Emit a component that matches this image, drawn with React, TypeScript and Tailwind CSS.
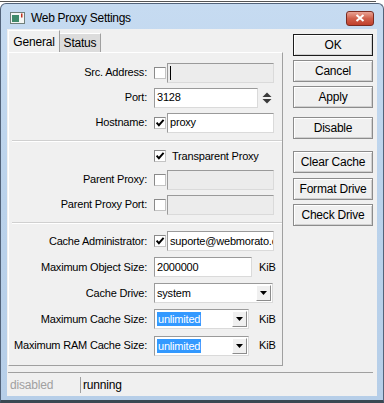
import React from "react";

const font = "font-['Liberation_Sans',Arial,sans-serif] tracking-[-0.2px]";

function CheckBox({ checked }: { checked?: boolean }) {
  return (
    <div className="w-[12px] h-[12px] shrink-0 bg-white border border-t-[#8a8a8a] border-l-[#8a8a8a] border-r-[#c4c4c4] border-b-[#c4c4c4] flex items-center justify-center">
      {checked && (
        <svg width="10" height="10" viewBox="0 0 10 10">
          <path d="M1.6 4.6 L3.9 7.2 L8.6 1.8" fill="none" stroke="#000" strokeWidth="1.9" />
        </svg>
      )}
    </div>
  );
}

function Field({
  value,
  w,
  disabled,
  cursor,
}: {
  value?: string;
  w: string;
  disabled?: boolean;
  cursor?: boolean;
}) {
  return (
    <div
      className={`${w} h-[20px] shrink-0 ${
        disabled ? "bg-[#ececec]" : "bg-white"
      } border border-t-[#9a9a9a] border-l-[#9a9a9a] border-r-[#dadada] border-b-[#dadada] flex items-center pl-[2px] overflow-hidden whitespace-nowrap`}
    >
      {cursor && <div className="w-[1px] h-[14px] bg-black" />}
      {value}
    </div>
  );
}

function DropArrow() {
  return (
    <div className="w-[15px] h-[16px] mr-[1px] shrink-0 bg-[#f0f0f0] border border-t-white border-l-white border-r-[#8c8c8c] border-b-[#8c8c8c] flex items-center justify-center">
      <svg width="7" height="4" viewBox="0 0 7 4">
        <path d="M0 0 H7 L3.5 4 Z" fill="#000" />
      </svg>
    </div>
  );
}

function Select({ value, w, selected }: { value: string; w: string; selected?: boolean }) {
  return (
    <div className={`${w} h-[20px] shrink-0 bg-white border border-t-[#9a9a9a] border-l-[#9a9a9a] border-r-[#dadada] border-b-[#dadada] flex items-center justify-between pl-[2px]`}>
      {selected ? (
        <span className="bg-[#3399ff] text-white px-[1px] leading-[14px]">{value}</span>
      ) : (
        <span>{value}</span>
      )}
      <DropArrow />
    </div>
  );
}

function Row({ label, h = "h-[25px]", children }: { label?: string; h?: string; children: React.ReactNode }) {
  return (
    <div className={`flex items-center ${h}`}>
      <div className="w-[138px] text-right whitespace-nowrap">{label}</div>
      <div className="ml-[7px] w-[120px] flex items-center">{children}</div>
    </div>
  );
}

function Btn({ label, def, mt }: { label: string; def?: boolean; mt: string }) {
  return (
    <div
      className={`${mt} w-[80px] h-[22px] flex items-center justify-center border ${
        def ? "border-[#1c1c1c]" : "border-[#8c8c8c]"
      } bg-[#f0f0f0] shadow-[inset_1px_1px_0_#ffffff,inset_-1px_-1px_0_#d0d0d0]`}
    >
      {label}
    </div>
  );
}

export default function App() {
  return (
    <div className={`w-[384px] h-[403px] bg-white flex flex-col overflow-hidden text-[11px] text-black ${font}`}>
      {/* window behind */}
      <div className="h-[3px] pt-[1px]">
        <div className="h-[1px] w-[376px] bg-[#555]" />
      </div>

      <div className="flex-1 flex flex-col bg-gradient-to-b from-[#c6dbf1] via-[#bad2eb] to-[#b6cee8] border border-[#52637a] border-b-[3px] border-b-[#3a4852] rounded-t-[6px]">
        {/* Title bar */}
        <div className="h-[25px] shrink-0 flex items-center pt-[3px] pl-[9px] pr-[9px]">
          <svg width="15" height="12" viewBox="0 0 15 12" className="shrink-0">
            <rect x="0.5" y="0.5" width="14" height="11" fill="#f4f6f4" stroke="#6f7f7a" />
            <rect x="2" y="3" width="7" height="7" fill="#3f8a6a" />
            <rect x="11" y="1.5" width="1.5" height="4" fill="#c03020" />
          </svg>
          <span className="ml-[6px] text-[12px] tracking-[-0.3px]">Web Proxy Settings</span>
          <div className="ml-auto w-[28px] h-[15px] rounded-[3px] border border-[#7a2c22] bg-gradient-to-b from-[#e9a395] via-[#d0604c] to-[#c0402c] flex items-center justify-center">
            <svg width="10" height="8" viewBox="0 0 10 8">
              <path d="M1.5 1 L8.5 7 M8.5 1 L1.5 7" stroke="#fff" strokeWidth="2" />
            </svg>
          </div>
        </div>

        {/* Client */}
        <div className="flex-1 flex flex-col pl-[6px] pr-[6px] pb-[4px]">
          <div className="flex-1 bg-[#f0f0f0] flex flex-col">
            <div className="flex">
              {/* Tabs + panel */}
              <div className="pl-[1px] pt-[1px] flex flex-col">
                <div className="flex items-end h-[22px]">
                  <div className="h-[22px] w-[52px] border-t border-l border-t-white border-l-white border-r border-r-[#a0a0a0] bg-[#f0f0f0] flex items-center justify-center text-[12px]">
                    General
                  </div>
                  <div className="h-[19px] w-[41px] border-t border-t-white border-r border-r-[#a0a0a0] bg-[#dcdcdc] flex items-center justify-center text-[12px]">
                    Status
                  </div>
                </div>
                <div className="w-[275px] h-[314px] border border-t-white border-l-white border-r-[#a0a0a0] border-b-[#a0a0a0] pt-[7px] flex flex-col">
                  <Row label="Src. Address:">
                    <CheckBox />
                    <div className="ml-[1px]">
                      <Field w="w-[107px]" disabled cursor />
                    </div>
                  </Row>
                  <Row label="Port:">
                    <Field w="w-[104px]" value="3128" />
                    <svg width="10" height="12" viewBox="0 0 10 12" className="ml-[4px]">
                      <path d="M0.5 5 L5 0.5 L9.5 5 Z" fill="#3a3a3a" />
                      <path d="M0.5 7 L9.5 7 L5 11.5 Z" fill="#3a3a3a" />
                    </svg>
                  </Row>
                  <Row label="Hostname:">
                    <CheckBox checked />
                    <div className="ml-[1px]">
                      <Field w="w-[107px]" value="proxy" />
                    </div>
                  </Row>

                  <div className="mt-[5px] mb-[3px] ml-[3px] border-t border-t-[#d0d0d0] border-b border-b-white" />

                  <Row label="" h="h-[22px]">
                    <CheckBox checked />
                    <span className="ml-[6px] whitespace-nowrap">Transparent Proxy</span>
                  </Row>
                  <Row label="Parent Proxy:">
                    <CheckBox />
                    <div className="ml-[1px]">
                      <Field w="w-[107px]" disabled />
                    </div>
                  </Row>
                  <Row label="Parent Proxy Port:">
                    <CheckBox />
                    <div className="ml-[1px]">
                      <Field w="w-[107px]" disabled />
                    </div>
                  </Row>

                  <div className="mt-[5px] mb-[4px] ml-[3px] border-t border-t-[#d0d0d0] border-b border-b-white" />

                  <Row label="Cache Administrator:" h="h-[26px]">
                    <CheckBox checked />
                    <div className="ml-[1px]">
                      <Field w="w-[107px]" value="suporte@webmorato.c" />
                    </div>
                  </Row>
                  <Row label="Maximum Object Size:" h="h-[26px]">
                    <Field w="w-[98px]" value="2000000" />
                    <span className="ml-[7px]">KiB</span>
                  </Row>
                  <Row label="Cache Drive:" h="h-[26px]">
                    <Select w="w-[119px]" value="system" />
                  </Row>
                  <Row label="Maximum Cache Size:" h="h-[26px]">
                    <Select w="w-[95px]" value="unlimited" selected />
                    <span className="ml-[10px]">KiB</span>
                  </Row>
                  <Row label="Maximum RAM Cache Size:" h="h-[27px]">
                    <Select w="w-[95px]" value="unlimited" selected />
                    <span className="ml-[10px]">KiB</span>
                  </Row>
                </div>
              </div>

              {/* Buttons */}
              <div className="ml-[10px] flex flex-col text-[12px]">
                <Btn label="OK" def mt="mt-[5px]" />
                <Btn label="Cancel" mt="mt-[4px]" />
                <Btn label="Apply" mt="mt-[4px]" />
                <Btn label="Disable" mt="mt-[9px]" />
                <Btn label="Clear Cache" mt="mt-[12px]" />
                <Btn label="Format Drive" mt="mt-[5px]" />
                <Btn label="Check Drive" mt="mt-[4px]" />
              </div>
            </div>

            {/* Status bar */}
            <div className="mt-[6px] ml-[1px] mr-[4px] border-t border-t-[#a0a0a0] flex-1 flex items-center">
              <div className="w-[72px] pl-[2px] text-[12px] text-[#a0a0a0]">disabled</div>
              <div className="h-[16px] w-[1px] bg-[#a0a0a0]" />
              <div className="pl-[2px] text-[12px]">running</div>
            </div>
          </div>
        </div>
      </div>
    </div>
  );
}
